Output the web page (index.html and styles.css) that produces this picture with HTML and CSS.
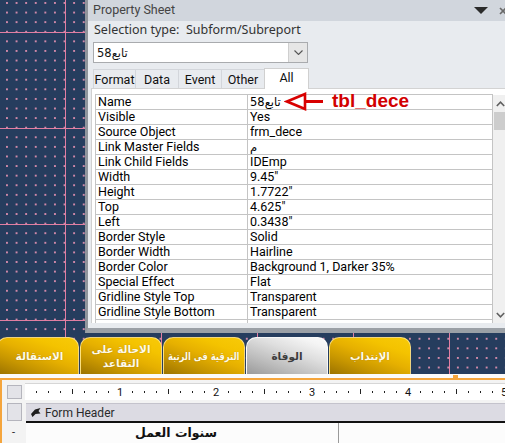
FILE: index.html
```html
<!DOCTYPE html>
<html>
<head>
<meta charset="utf-8">
<link rel="stylesheet" href="styles.css">
</head>
<body>
<div class="screen">
  <div class="canvas">
    <div class="sheet">
      <div class="sheet-title">
        <span class="title-text">Property Sheet</span>
        <svg class="ico-tri" width="14" height="7" viewBox="0 0 14 7"><polygon points="0,0 14,0 7,7" fill="#2b2b2b"/></svg>
        <svg class="ico-x" width="8" height="8" viewBox="0 0 8 8"><path d="M1 1 L7 7 M7 1 L1 7" stroke="#6a6a6a" stroke-width="1.6"/></svg>
      </div>
      <div class="sel-type">Selection type:&nbsp; Subform/Subreport</div>
      <div class="combo">
        <span class="combo-val">تابع58</span>
        <span class="combo-btn"><svg width="9" height="5" viewBox="0 0 9 5"><path d="M0.5 0.5 L4.5 4.5 L8.5 0.5" fill="none" stroke="#555" stroke-width="1.1"/></svg></span>
      </div>
      <div class="tabs">
        <span class="tab w42">Format</span>
        <span class="tab">Data</span>
        <span class="tab">Event</span>
        <span class="tab">Other</span>
        <span class="tab active">All</span>
      </div>
      <div class="content">
        <div class="grid">
          <div class="row"><div class="lbl">Name</div><div class="val ar">تابع58</div></div>
          <div class="row"><div class="lbl">Visible</div><div class="val">Yes</div></div>
          <div class="row"><div class="lbl">Source Object</div><div class="val">frm_dece</div></div>
          <div class="row"><div class="lbl">Link Master Fields</div><div class="val ar">م</div></div>
          <div class="row"><div class="lbl">Link Child Fields</div><div class="val">IDEmp</div></div>
          <div class="row"><div class="lbl">Width</div><div class="val">9.45"</div></div>
          <div class="row"><div class="lbl">Height</div><div class="val">1.7722"</div></div>
          <div class="row"><div class="lbl">Top</div><div class="val">4.625"</div></div>
          <div class="row"><div class="lbl">Left</div><div class="val">0.3438"</div></div>
          <div class="row"><div class="lbl">Border Style</div><div class="val">Solid</div></div>
          <div class="row"><div class="lbl">Border Width</div><div class="val">Hairline</div></div>
          <div class="row"><div class="lbl">Border Color</div><div class="val">Background 1, Darker 35%</div></div>
          <div class="row"><div class="lbl">Special Effect</div><div class="val">Flat</div></div>
          <div class="row"><div class="lbl">Gridline Style Top</div><div class="val">Transparent</div></div>
          <div class="row"><div class="lbl">Gridline Style Bottom</div><div class="val">Transparent</div></div>
          <div class="row partial"><div class="lbl"></div><div class="val"></div></div>
        </div>
        <div class="scrollbar">
          <div class="sb-btn"><svg width="9" height="6" viewBox="0 0 9 6"><path d="M0.8 5 L4.5 1.2 L8.2 5" fill="none" stroke="#606060" stroke-width="1.6"/></svg></div>
          <div class="sb-thumb"></div>
          <div class="sb-track"></div>
          <div class="sb-btn"><svg width="9" height="6" viewBox="0 0 9 6"><path d="M0.8 1 L4.5 4.8 L8.2 1" fill="none" stroke="#606060" stroke-width="1.6"/></svg></div>
        </div>
      </div>
    </div>

    <div class="form-tabs">
      <div class="ftab gold first"><span>الاستقالة</span></div>
      <div class="ftab gold"><span>الاحالة على<br>التقاعد</span></div>
      <div class="ftab gold"><span class="squeeze">الترقية فى الرتبة</span></div>
      <div class="ftab silver"><span>الوفاة</span></div>
      <div class="ftab gold"><span>الإنتداب</span></div>
    </div>
  </div>

  <div class="band"></div>
  <div class="design">
    <div class="drow r1">
      <div class="lcell"><div class="lbox b1"></div></div>
      <div class="ruler">
        <svg width="480" height="17" viewBox="0 0 480 17">
          <g fill="#222">
            <rect x="11" y="8" width="1" height="2"/><rect x="23" y="8" width="1" height="2"/><rect x="35" y="8" width="1" height="2"/><rect x="47" y="6" width="1" height="5"/><rect x="59" y="8" width="1" height="2"/><rect x="71" y="8" width="1" height="2"/><rect x="83" y="8" width="1" height="2"/>
            <rect x="107" y="8" width="1" height="2"/><rect x="119" y="8" width="1" height="2"/><rect x="131" y="8" width="1" height="2"/><rect x="143" y="6" width="1" height="5"/><rect x="155" y="8" width="1" height="2"/><rect x="167" y="8" width="1" height="2"/><rect x="179" y="8" width="1" height="2"/>
            <rect x="203" y="8" width="1" height="2"/><rect x="215" y="8" width="1" height="2"/><rect x="227" y="8" width="1" height="2"/><rect x="239" y="6" width="1" height="5"/><rect x="251" y="8" width="1" height="2"/><rect x="263" y="8" width="1" height="2"/><rect x="275" y="8" width="1" height="2"/>
            <rect x="299" y="8" width="1" height="2"/><rect x="311" y="8" width="1" height="2"/><rect x="323" y="8" width="1" height="2"/><rect x="335" y="6" width="1" height="5"/><rect x="347" y="8" width="1" height="2"/><rect x="359" y="8" width="1" height="2"/><rect x="371" y="8" width="1" height="2"/>
            <rect x="395" y="8" width="1" height="2"/><rect x="407" y="8" width="1" height="2"/><rect x="419" y="8" width="1" height="2"/><rect x="431" y="6" width="1" height="5"/><rect x="443" y="8" width="1" height="2"/><rect x="455" y="8" width="1" height="2"/><rect x="467" y="8" width="1" height="2"/>
          </g>
          <g class="rnum" font-size="11" fill="#111" text-anchor="middle">
            <text x="95" y="12.5">1</text><text x="191" y="12.5">2</text><text x="287" y="12.5">3</text><text x="383" y="12.5">4</text><text x="479" y="12.5">5</text>
          </g>
        </svg>
      </div>
    </div>
    <div class="drow r2">
      <div class="lcell"><div class="lbox b2"></div></div>
      <div class="fheader">
        <svg class="fh-ico" width="10" height="9" viewBox="0 0 10 9"><path d="M0 6 L4 1.5 L9.5 0 L7.5 3 L9.5 5.5 L4.5 6 L1.5 9 Z" fill="#1e1e1e"/></svg>
        <span>Form Header</span>
      </div>
    </div>
    <div class="drow r3">
      <div class="lcell dash">-</div>
      <div class="fbody">
        <div class="fcell"><span class="ftitle">سنوات العمل</span></div>
        <div class="fcell2"></div>
      </div>
    </div>
  </div>

  <div class="marker"></div>
  <div class="annot">
    <svg width="40" height="20" viewBox="0 0 40 20"><path d="M3 9.5 L21 2 L21 17 Z" fill="none" stroke="#d80000" stroke-width="2.6" stroke-linejoin="miter"/><path d="M21 9.5 L39 9.5" stroke="#d80000" stroke-width="3"/></svg>
    <span class="annot-text">tbl_dece</span>
  </div>
</div>
</body>
</html>
```

FILE: styles.css
```css
html, body {
  margin: 0;
  padding: 0;
}
body {
  width: 505px;
  height: 443px;
  overflow: hidden;
  background: #f4f4f4;
  font-family: "Roboto", "Noto Sans", sans-serif;
}
.screen {
  position: relative;
  width: 505px;
  height: 443px;
  overflow: hidden;
}

/* design canvas */
.canvas {
  position: relative;
  height: 374px;
  box-sizing: border-box;
  padding-top: 337px;
  background-color: #263d5e;
  background-image:
    linear-gradient(90deg, #e27ea2 1px, transparent 1px),
    linear-gradient(180deg, #e27ea2 1px, transparent 1px),
    radial-gradient(circle at 1px 1px, #cf88a8 0.75px, transparent 0.95px);
  background-size: 96px 100%, 100% 96px, 9.6px 9.6px;
  background-position: 65px 0, 0 32px, 6px 2px;
}

/* property sheet window */
.sheet {
  position: absolute;
  left: 85px;
  top: 0;
  width: 430px;
  height: 333px;
  box-sizing: border-box;
  background: #e8ebef;
  border-left: 3px solid #90959c;
  border-bottom: 5px solid #9ba0a6;
  display: flex;
  flex-direction: column;
}
.sheet-title {
  height: 21px;
  background: #d1d6dd;
  display: flex;
  align-items: center;
  padding: 0 8px 0 5px;
  color: #444;
  font-size: 12.5px;
}
.title-text {
  flex: 1;
  position: relative;
  top: -1px;
}
.ico-tri {
  margin-right: 11px;
}
.sel-type {
  height: 21px;
  line-height: 17px;
  padding-left: 6px;
  font-family: "Noto Sans", sans-serif;
  font-size: 12.5px;
  color: #333;
}
.combo {
  margin-left: 5px;
  width: 215px;
  height: 21px;
  box-sizing: border-box;
  background: #fff;
  border: 1px solid #a9abae;
  display: flex;
  align-items: center;
}
.combo-val {
  flex: 1;
  padding-left: 3px;
  font-family: "DejaVu Sans", sans-serif;
  font-size: 11.5px;
  color: #111;
}
.combo-btn {
  width: 18px;
  height: 19px;
  background: #e6e6e6;
  border-left: 1px solid #cfcfcf;
  display: flex;
  align-items: center;
  justify-content: center;
}
.tabs {
  margin-top: 5px;
  margin-left: 5px;
  height: 20px;
  display: flex;
  align-items: flex-end;
  position: relative;
  z-index: 2;
}
.tab {
  width: 43px;
  height: 19px;
  box-sizing: border-box;
  border: 1px solid #d3d6db;
  border-right: none;
  border-bottom: none;
  font-size: 12.5px;
  color: #111;
  display: flex;
  align-items: center;
  justify-content: center;
}
.tab.w42 { width: 42px; }
.tab.active {
  width: 45px;
  height: 21px;
  background: #fff;
  border: 1px solid #d0d0d0;
  border-bottom: none;
  margin-bottom: -1px;
  padding-bottom: 3px;
}
.content {
  margin-left: 3px;
  height: 235px;
  box-sizing: border-box;
  background: #fff;
  border-left: 1px solid #d0d0d0;
  border-top: 1px solid #d3d3d3;
  padding: 5px 0 0 3px;
  display: flex;
  align-items: flex-start;
  overflow: hidden;
}
.grid {
  width: 398px;
  box-sizing: border-box;
  border: 1px solid #c4c4c4;
  border-bottom: none;
  flex: none;
}
.row {
  display: flex;
  height: 15px;
  box-sizing: border-box;
  border-bottom: 1px solid #c4c4c4;
  font-size: 12.5px;
  line-height: 14px;
  color: #000;
}
.lbl {
  width: 152px;
  box-sizing: border-box;
  padding-left: 2px;
  border-right: 1px solid #c4c4c4;
  white-space: nowrap;
}
.val {
  flex: 1;
  padding-left: 2px;
  white-space: nowrap;
}
.val.ar {
  font-family: "DejaVu Sans", sans-serif;
  font-size: 11.5px;
}
.row.partial {
  border-bottom: none;
}
.scrollbar {
  width: 17px;
  height: 228px;
  margin-top: 1px;
  background: #f0f0f0;
  display: flex;
  flex-direction: column;
  flex: none;
}
.sb-btn {
  height: 17px;
  display: flex;
  align-items: center;
  padding-left: 3px;
}
.sb-thumb {
  height: 18px;
  margin-left: 1px;
  background: #cdcdcd;
}
.sb-track {
  flex: 1;
}

/* annotation */
.annot {
  position: absolute;
  left: 284px;
  top: 92px;
  display: flex;
  align-items: center;
  gap: 8px;
  height: 20px;
}
.annot svg {
  display: block;
}
.annot-text {
  font-family: "Liberation Sans", Arial, sans-serif;
  font-weight: bold;
  font-size: 19px;
  color: #d20000;
  line-height: 20px;
  position: relative;
  top: -1px;
}

/* form tabs */
.form-tabs {
  display: flex;
  gap: 1px;
  margin-left: -3px;
  height: 37px;
}
.ftab {
  width: 82px;
  height: 37px;
  box-sizing: border-box;
  border-radius: 10px 10px 0 0;
  border: 1px solid rgba(255, 236, 170, 0.75);
  border-bottom: none;
  display: flex;
  align-items: center;
  justify-content: center;
  text-align: center;
  font-family: "DejaVu Sans", sans-serif;
  font-weight: bold;
  font-size: 10.5px;
  line-height: 14px;
  white-space: nowrap;
  direction: rtl;
  overflow: hidden;
}
.ftab .squeeze {
  display: inline-block;
  transform: scaleX(0.8);
}
.ftab.gold {
  background: linear-gradient(20deg, #9c7300 0%, #c79600 28%, #e6b000 52%, #f4c300 75%, #f8ca08 100%);
  color: #fffbe8;
  text-shadow: 0 0 1px rgba(110, 70, 0, 0.55);
}
.ftab.silver {
  background: linear-gradient(20deg, #9a9a9a 0%, #bdbdbd 30%, #dedede 60%, #f4f4f4 85%, #fafafa 100%);
  border-color: rgba(255, 255, 255, 0.9);
  color: #3c3c3c;
}
.ftab.first {
  padding-left: 3px;
}

/* band + design area */
.band {
  height: 4px;
  background: #fbfbfb;
}
.marker {
  position: absolute;
  left: 453px;
  top: 375px;
  width: 5px;
  height: 3px;
  background: #f5a53c;
}
.design {
  height: 65px;
  border-top: 2px solid #f5a53c;
  border-left: 2px solid #f5a53c;
  background: #f3f3f3;
  display: flex;
  flex-direction: column;
}
.drow {
  display: flex;
}
.r1 { height: 20px; }
.r2 { height: 23px; }
.r3 { flex: 1; }
.lcell {
  width: 23px;
  flex: none;
}
.lbox {
  margin-left: 5px;
  width: 15px;
  box-sizing: border-box;
  background: #e3e3e8;
  border: 1px solid #b5b5bd;
}
.b1 { margin-top: 5px; height: 14px; }
.b2 { margin-top: 3px; height: 18px; }
.dash {
  background: #f3f3f3;
  font-size: 11px;
  line-height: 20px;
  padding-left: 10px;
  box-sizing: border-box;
  color: #222;
}
.ruler {
  margin-top: 3px;
  height: 17px;
  flex: 1;
  background: #fff;
  box-sizing: border-box;
  border-top: 1px solid #d6d6d6;
}
.ruler svg {
  display: block;
  margin-top: -1px;
}
.rnum {
  font-family: "Roboto", "Noto Sans", sans-serif;
}
.fheader {
  margin-top: 3px;
  margin-left: 1px;
  flex: 1;
  height: 20px;
  box-sizing: border-box;
  background: #dcdbe3;
  border-top: 1px solid #c4c3cc;
  border-bottom: 2px solid #111;
  display: flex;
  align-items: center;
  padding-left: 5px;
  gap: 4px;
  font-size: 12px;
  color: #2a2a2a;
}
.fbody {
  flex: 1;
  margin-left: 1px;
  background: #fcfcfc;
  display: flex;
}
.fcell {
  width: 312px;
  border-right: 1px solid #9a9a9a;
  display: flex;
  justify-content: center;
}
.ftitle {
  font-family: "DejaVu Sans", sans-serif;
  font-weight: bold;
  font-size: 12.5px;
  line-height: 20px;
  color: #111;
  margin-right: 12px;
}
.fcell2 {
  flex: 1;
}
```
